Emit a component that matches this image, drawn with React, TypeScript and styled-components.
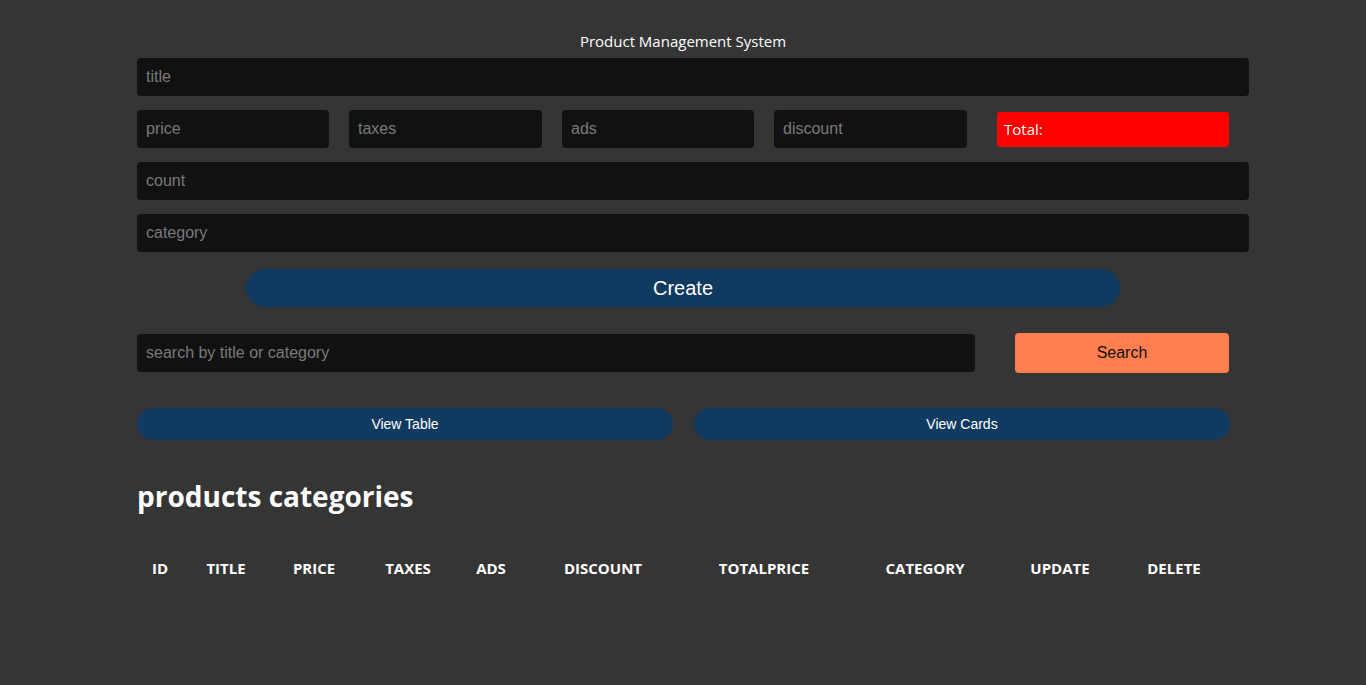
import React from "react";
import styled, { createGlobalStyle } from "styled-components";

const Global = createGlobalStyle`
  html, body { margin: 0; padding: 0; background: #353535; }
  body { font-family: "Open Sans", "Noto Sans", sans-serif; color: #fff; }
  * { box-sizing: border-box; }
`;

const Page = styled.div`
  width: 1112px;
  margin: 0 0 0 137px;
  padding-top: 31px;
  display: flex;
  flex-direction: column;
  align-items: flex-start;
`;

const Heading = styled.div`
  width: 1092px;
  text-align: center;
  font-size: 15px;
  line-height: 20px;
  height: 27px;
  font-family: "Open Sans", sans-serif;
`;

const Input = styled.input<{ $w?: number }>`
  width: ${(p) => (p.$w ? `${p.$w}px` : "1112px")};
  height: 38px;
  flex: none;
  background: #111;
  border: none;
  border-radius: 4px;
  padding: 0 9px;
  color: #fff;
  font-family: "Liberation Sans", Arial, sans-serif;
  font-size: 16px;
  outline: none;
  &::placeholder { color: #7a7a7a; }
`;

const Row = styled.div<{ $gap: number; $mt: number }>`
  display: flex;
  align-items: center;
  gap: ${(p) => p.$gap}px;
  margin-top: ${(p) => p.$mt}px;
`;

const Total = styled.div`
  width: 232px;
  height: 35px;
  background: #ff0000;
  border-radius: 3px;
  margin-left: 10px;
  display: flex;
  align-items: center;
  padding-left: 7px;
  font-size: 15px;
  font-family: "Open Sans", sans-serif;
`;

const Create = styled.button`
  width: 874px;
  height: 38px;
  margin: 17px 0 0 109px;
  border: none;
  border-radius: 20px;
  background: #113a60;
  color: #fff;
  font-family: "Liberation Sans", Arial, sans-serif;
  font-size: 20px;
`;

const SearchBtn = styled.button`
  width: 214px;
  height: 40px;
  margin-left: 20px;
  border: none;
  border-radius: 4px;
  background: #ff7f50;
  color: #111;
  font-family: "Liberation Sans", Arial, sans-serif;
  font-size: 16px;
`;

const ViewBtn = styled.button`
  width: 536px;
  height: 32px;
  border: none;
  border-radius: 16px;
  background: #113a60;
  color: #fff;
  font-family: "Liberation Sans", Arial, sans-serif;
  font-size: 14px;
`;

const Title = styled.h2`
  margin: 36px 0 0 0;
  font-size: 28px;
  font-weight: 700;
  line-height: 40px;
  font-family: "Open Sans", sans-serif;
`;

const Table = styled.table`
  width: 1094px;
  border-collapse: collapse;
  margin-top: 40px;
  table-layout: fixed;
`;

const Th = styled.th`
  font-size: 15px;
  font-weight: 700;
  text-align: center;
  padding: 0;
  height: 24px;
  font-family: "Open Sans", sans-serif;
`;

const cols = [46, 86, 90, 98, 68, 156, 166, 156, 114, 114];
const heads = ["ID", "TITLE", "PRICE", "TAXES", "ADS", "DISCOUNT", "TOTALPRICE", "CATEGORY", "UPDATE", "DELETE"];

export default function App() {
  return (
    <>
      <Global />
      <Page>
        <Heading>Product Management System</Heading>
        <Input placeholder="title" />
        <Row $gap={20} $mt={14}>
          <Input $w={192} placeholder="price" />
          <Input $w={193} placeholder="taxes" />
          <Input $w={192} placeholder="ads" />
          <Input $w={193} placeholder="discount" />
          <Total>Total:</Total>
        </Row>
        <Row $gap={0} $mt={14}>
          <Input placeholder="count" />
        </Row>
        <Row $gap={0} $mt={14}>
          <Input placeholder="category" />
        </Row>
        <Create>Create</Create>
        <Row $gap={20} $mt={26}>
          <Input $w={838} placeholder="search by title or category" />
          <SearchBtn>Search</SearchBtn>
        </Row>
        <Row $gap={21} $mt={35}>
          <ViewBtn>View Table</ViewBtn>
          <ViewBtn>View Cards</ViewBtn>
        </Row>
        <Title>products categories</Title>
        <Table>
          <colgroup>
            {cols.map((w, i) => (
              <col key={i} style={{ width: w }} />
            ))}
          </colgroup>
          <thead>
            <tr>
              {heads.map((h) => (
                <Th key={h}>{h}</Th>
              ))}
            </tr>
          </thead>
        </Table>
      </Page>
    </>
  );
}
